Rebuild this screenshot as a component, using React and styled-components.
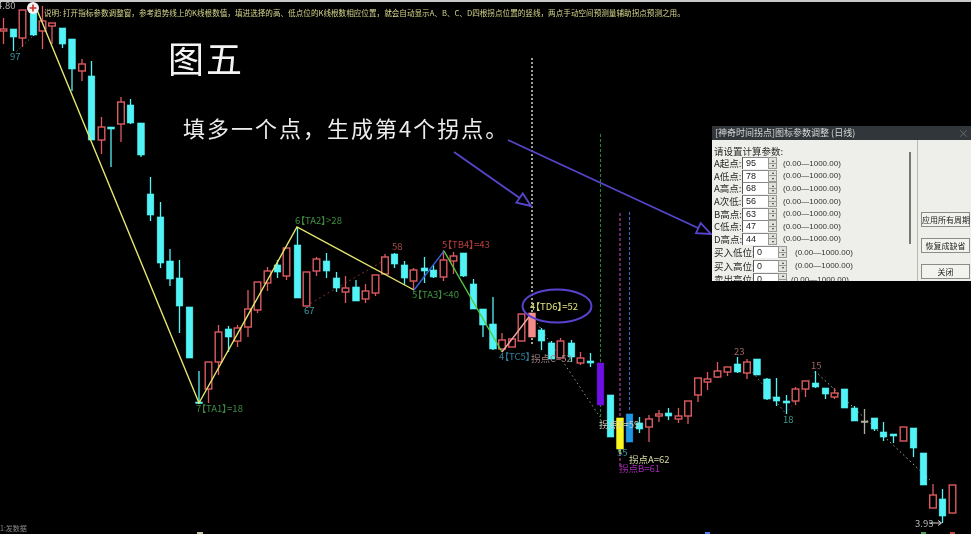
import React from "react"
import styled, { createGlobalStyle } from "styled-components"

const SANS = `"Liberation Sans", "Noto Sans CJK SC", sans-serif`
const CJK = `"Noto Sans CJK SC", "Liberation Sans", sans-serif`

const TONES = {
  red: "#dc5a60",
  cyan: "#52f3f6",
  pink: "#f58a8a",
  violet: "#6f0fe6",
  yellow: "#f8f820",
  blue: "#1e96e6",
  ash: "#b0ae9e",
}
const HOLLOW = ["red"]

// x, high, body top, body bottom, low, tone
const CANDLES = [
  [3.5, 18, 29, 31, 44, "red"], [13.5, 29, 29, 37, 51, "cyan"], [22.5, 10, 10, 38, 47, "red"],
  [33.5, 8, 12, 35, 36, "cyan"], [42.5, 6, 21, 31, 49, "red"], [52, 23, 23, 26, 44, "red"],
  [62.5, 28, 28, 44, 48, "cyan"], [72, 39, 39, 69, 91, "cyan"], [82, 59, 64, 71, 81, "red"],
  [91.5, 61, 76, 140, 140, "cyan"], [101.5, 117, 127, 140, 154, "red"], [111, 127, 127, 129, 167, "cyan"],
  [121, 97, 102, 124, 142, "red"], [130.5, 99, 105, 123, 124, "cyan"], [141, 123, 123, 155, 157, "cyan"],
  [150.5, 177, 194, 215, 221, "cyan"], [160.5, 202, 217, 263, 268, "cyan"], [170, 249, 261, 279, 286, "cyan"],
  [179.5, 260, 278, 306, 333, "cyan"], [189.5, 307, 307, 358, 358, "cyan"], [199, 371, 402, 403, 404, "cyan"],
  [208.5, 362, 362, 389, 403, "red"], [218.5, 325, 332, 362, 375, "red"], [228.5, 326, 329, 337, 352, "cyan"],
  [237.5, 325, 328, 341, 347, "red"], [248, 290, 309, 327, 337, "red"], [257.5, 282, 282, 310, 313, "red"],
  [267.5, 267, 271, 283, 291, "red"], [277.5, 260, 265, 272, 278, "cyan"], [286.5, 248, 248, 276, 280, "red"],
  [297.5, 228, 245, 298, 298, "cyan"], [306.5, 272, 272, 306, 306, "red"], [316.5, 257, 259, 271, 276, "red"],
  [326.5, 253, 261, 271, 278, "cyan"], [336.5, 272, 278, 288, 292, "cyan"], [345.5, 276, 288, 292, 303, "red"],
  [356, 280, 287, 301, 301, "cyan"], [365.5, 284, 291, 299, 303, "red"], [375.5, 275, 275, 293, 296, "red"],
  [385, 254, 257, 274, 275, "red"], [394.5, 253, 254, 264, 268, "cyan"], [404.5, 261, 265, 278, 285, "cyan"],
  [413.5, 268, 270, 281, 290, "red"], [424.5, 257, 268, 271, 283, "cyan"], [433.5, 265, 270, 277, 278, "cyan"],
  [443.5, 250, 260, 277, 281, "red"], [453.5, 252, 256, 261, 274, "red"], [463.5, 253, 253, 276, 277, "cyan"],
  [473.5, 279, 284, 309, 309, "cyan"], [483, 309, 309, 325, 337, "cyan"], [493, 297, 324, 349, 350, "cyan"],
  [502, 333, 340, 349, 350, "red"], [512, 339, 339, 347, 347, "red"], [521.5, 314, 314, 341, 341, "red"],
  [532, 313, 313, 337, 337, "pink"], [541.5, 328, 330, 341, 350, "cyan"], [551.5, 341, 343, 359, 359, "cyan"],
  [560.5, 338, 341, 358, 358, "red"], [571.5, 340, 343, 357, 362, "cyan"], [580.5, 352, 358, 363, 365, "red"],
  [590.5, 353, 361, 363, 367, "cyan"], [600.5, 363, 363, 405, 405, "violet"], [610.5, 395, 395, 437, 437, "cyan"],
  [620, 418, 418, 449, 454, "yellow"], [629.5, 414, 414, 442, 442, "blue"], [639.5, 417, 423, 429, 433, "cyan"],
  [649, 415, 419, 427, 442, "red"], [659, 410, 414, 416, 422, "red"], [668.5, 408, 413, 416, 420, "cyan"],
  [678.5, 408, 416, 419, 423, "red"], [688, 401, 401, 416, 424, "red"], [698, 378, 378, 395, 402, "red"],
  [707.5, 372, 379, 382, 390, "red"], [717.5, 362, 371, 377, 378, "red"], [727.5, 367, 367, 372, 376, "red"],
  [737.5, 357, 364, 372, 373, "cyan"], [747, 359, 362, 373, 379, "red"], [757, 359, 359, 375, 375, "cyan"],
  [767, 378, 379, 399, 400, "cyan"], [776.5, 378, 397, 401, 406, "cyan"], [786.5, 395, 401, 403, 414, "cyan"],
  [795.5, 387, 389, 401, 405, "red"], [805.5, 381, 381, 389, 397, "red"], [815.5, 371, 383, 387, 388, "cyan"],
  [825.5, 388, 388, 394, 399, "cyan"], [834.5, 388, 393, 397, 399, "red"], [844.5, 389, 389, 408, 408, "cyan"],
  [854.5, 406, 408, 421, 421, "cyan"], [864.5, 409, 421, 422, 434, "ash"], [874.5, 418, 418, 429, 431, "cyan"],
  [883.5, 422, 432, 437, 441, "cyan"], [893.5, 434, 434, 436, 443, "cyan"], [903.5, 427, 427, 441, 441, "red"],
  [913.5, 428, 428, 448, 457, "cyan"], [923.5, 453, 453, 485, 485, "cyan"], [933, 484, 495, 508, 508, "red"],
  [942.5, 489, 499, 516, 523, "cyan"], [952.5, 485, 485, 513, 513, "red"],
]

const TREND = [
  { d: "M35 5 L199 403 L297 227 L414 290", stroke: "#e6e66e", width: 1.4 },
  { d: "M414 290 L444 251", stroke: "#3a62d8", width: 1.4 },
  { d: "M444 251 L502 352", stroke: "#58c83c", width: 1.4 },
  { d: "M502 352 L532 313", stroke: "#f5a8a8", width: 1.4 },
]

const DOTTED = [
  { d: "M306 306 L385 260", stroke: "#8a2c2c", width: 1, dash: "2 3" },
  { d: "M537 323 L600 417", stroke: "#8f9a80", width: 1, dash: "1.5 3" },
  { d: "M35 34 L16 52", stroke: "#5f8f80", width: 0.8, dash: "1.5 2.5" },
  { d: "M747 365 L786 414", stroke: "#9a9a8a", width: 0.8, dash: "1.5 3" },
  { d: "M786 414 L815 371", stroke: "#7a3434", width: 0.8, dash: "1.5 3" },
  { d: "M815 371 L930 480", stroke: "#c8c8b4", width: 0.9, dash: "1.5 3" },
]

const GUIDES = [
  { x: 532, y1: 58, y2: 346, stroke: "#c8c8b8", width: 1.6, dash: "2 2" },
  { x: 600.5, y1: 134, y2: 420, stroke: "#28803a", width: 1.1, dash: "3 2" },
  { x: 620, y1: 213, y2: 466, stroke: "#a844a8", width: 1.2, dash: "3 2" },
  { x: 629.5, y1: 212, y2: 412, stroke: "#4068c8", width: 1.1, dash: "3 2" },
]

const LABELS = [
  { x: 10, y: 60, fill: "#3f9aa4", text: "97" },
  { x: -3, y: 9, fill: "#b5b5b5", text: "4.80" },
  { x: 196, y: 412, fill: "#3f8a48", text: "7【TA1】=18" },
  { x: 295, y: 224, fill: "#3f9040", text: "6【TA2】>28" },
  { x: 304, y: 314, fill: "#3f9aa4", text: "67" },
  { x: 392, y: 250, fill: "#a84a4a", text: "58" },
  { x: 442, y: 248, fill: "#b83c3c", text: "5【TB4】=43" },
  { x: 412, y: 298, fill: "#3f9040", text: "5【TA3】<40" },
  { x: 499, y: 360, fill: "#2f7f9c", text: "4【TC5】" },
  { x: 530, y: 310, fill: "#e0e07a", text: "4【TD6】=52" },
  { x: 531, y: 362, fill: "#a08080", text: "拐点C=52" },
  { x: 599, y: 428, fill: "#d0d0c0", text: "拐点X=59" },
  { x: 617, y: 456, fill: "#3f9aa4", text: "55" },
  { x: 629, y: 463, fill: "#d8d8a0", text: "拐点A=62" },
  { x: 619, y: 472, fill: "#a028b0", text: "拐点B=61" },
  { x: 734, y: 355, fill: "#a06464", text: "23" },
  { x: 811, y: 369, fill: "#a06464", text: "15" },
  { x: 783, y: 423, fill: "#3f9a8c", text: "18" },
  { x: 915, y: 527, fill: "#b8b8b8", text: "3.93" },
]

const PARAMS = [
  { name: "A起点", value: "95" },
  { name: "A低点", value: "78" },
  { name: "A高点", value: "68" },
  { name: "A次低", value: "56" },
  { name: "B高点", value: "63" },
  { name: "C低点", value: "47" },
  { name: "D高点", value: "44" },
  { name: "买入低位", value: "0", wide: true, gap: 8 },
  { name: "买入高位", value: "0", wide: true, gap: 8 },
  { name: "卖出高位", value: "0", wide: true, gap: 4 },
]

const Candle = ({ x, hi, top, bot, lo, tone }) => {
  const hollow = HOLLOW.includes(tone)
  const height = Math.max(bot - top, 1.5)
  return (
    <g>
      <Wick x1={x} x2={x} y1={hi} y2={lo} $tone={tone} />
      <Body
        x={x - 3.3}
        y={top}
        width={6.6}
        height={height}
        $tone={tone}
        $hollow={hollow}
      />
    </g>
  )
}

const Arrow = ({ x1, y1, x2, y2 }) => {
  const angle = Math.atan2(y2 - y1, x2 - x1)
  const len = 15
  const spread = 0.38
  const ax = x2 - len * Math.cos(angle - spread)
  const ay = y2 - len * Math.sin(angle - spread)
  const bx = x2 - len * Math.cos(angle + spread)
  const by = y2 - len * Math.sin(angle + spread)
  return (
    <g>
      <line x1={x1} y1={y1} x2={x2} y2={y2} stroke="#5546cc" strokeWidth="1.8" />
      <polygon
        points={`${x2},${y2} ${ax},${ay} ${bx},${by}`}
        fill="#000"
        stroke="#5546cc"
        strokeWidth="1.8"
      />
    </g>
  )
}

const Chart = () => (
  <ChartSvg viewBox="0 0 971 534" width="971" height="534">
    {GUIDES.map((g, i) => (
      <line
        key={i}
        x1={g.x}
        x2={g.x}
        y1={g.y1}
        y2={g.y2}
        stroke={g.stroke}
        strokeWidth={g.width}
        strokeDasharray={g.dash}
      />
    ))}
    {DOTTED.map((l, i) => (
      <path
        key={i}
        d={l.d}
        fill="none"
        stroke={l.stroke}
        strokeWidth={l.width}
        strokeDasharray={l.dash}
      />
    ))}
    {CANDLES.map(([x, hi, top, bot, lo, tone]) => (
      <Candle key={x} x={x} hi={hi} top={top} bot={bot} lo={lo} tone={tone} />
    ))}
    {TREND.map((l, i) => (
      <path key={i} d={l.d} fill="none" stroke={l.stroke} strokeWidth={l.width} />
    ))}
    {LABELS.map((l, i) => (
      <ChartText key={i} x={l.x} y={l.y} fill={l.fill}>
        {l.text}
      </ChartText>
    ))}
    <circle cx="33" cy="8" r="6" fill="#f4f4f4" />
    <path d="M33 4.5 V11.5 M29.5 8 H36.5" stroke="#d02828" strokeWidth="1.6" />
    <path d="M929 523 H941" stroke="#d8d8d8" strokeWidth="1" />
    <path d="M938 520.5 L941.5 523 L938 525.5" fill="none" stroke="#d8d8d8" strokeWidth="1" />
    <ellipse cx="557" cy="306" rx="34.5" ry="16.5" fill="none" stroke="#5a42d0" strokeWidth="2" />
    <Arrow x1={454} y1={152} x2={531} y2={206} />
    <Arrow x1={508} y1={140} x2={711} y2={234} />
    <rect x="197" y="532" width="6" height="2" fill="#c8c0a8" />
    <rect x="705" y="532" width="5" height="2" fill="#4a7ae8" />
    <rect x="921" y="532" width="5" height="2" fill="#4aa050" />
    <rect x="950" y="532" width="5" height="2" fill="#c04848" />
  </ChartSvg>
)

const SpinBox = ({ wide, value }) => (
  <SpinWrap>
    <Field $wide={wide}>{value}</Field>
    <Spin>
      <SpinBtn $up />
      <SpinBtn />
    </Spin>
  </SpinWrap>
)

const ParamDialog = () => (
  <Dialog>
    <TitleBar>
      <span>[神奇时间拐点]图标参数调整 (日线)</span>
      <CloseMark>×</CloseMark>
    </TitleBar>
    <DialogBody>
      <Params>
        <ParamsHead>请设置计算参数:</ParamsHead>
        {PARAMS.map(p => (
          <ParamRow key={p.name} $wide={p.wide}>
            <ParamName $wide={p.wide}>{p.name}:</ParamName>
            <SpinBox wide={p.wide} value={p.value} />
            <Range $gap={p.gap || 6}>(0.00—1000.00)</Range>
          </ParamRow>
        ))}
      </Params>
      <ScrollTrack>
        <ScrollThumb />
      </ScrollTrack>
      <SideActions>
        <ActionButton>应用所有周期</ActionButton>
        <ActionButton>恢复成缺省</ActionButton>
        <ActionButton>关闭</ActionButton>
      </SideActions>
    </DialogBody>
  </Dialog>
)

export default function App() {
  return (
    <>
      <GlobalStyle />
      <Stage>
        <Chart />
        <Notice>
          说明: 打开指标参数调整窗，参考趋势线上的K线根数值，填进选择的高、低点位的K线根数相应位置，就会自动显示A、B、C、D四根拐点位置的竖线，两点手动空间预测量辅助拐点预测之用。
        </Notice>
        <Heading>图五</Heading>
        <Caption>填多一个点，生成第4个拐点。</Caption>
        <StatusTag>1:发数据</StatusTag>
        <ParamDialog />
      </Stage>
    </>
  )
}

const GlobalStyle = createGlobalStyle`
  html, body {
    margin: 0;
    background: #000;
  }
  body {
    font-family: ${SANS};
    overflow: hidden;
  }
`

const Stage = styled.div`
  position: relative;
  width: 971px;
  height: 534px;
  background: #000;
  border-top: 2px solid #c8c8c8;
  box-sizing: border-box;
  overflow: hidden;
  filter: blur(0.35px);
`

const ChartSvg = styled.svg`
  position: absolute;
  top: -2px;
  left: 0;
  display: block;
`

const Wick = styled.line`
  stroke: ${p => TONES[p.$tone]};
  stroke-width: 1.3;
`

const Body = styled.rect`
  fill: ${p => (p.$hollow ? "#000" : TONES[p.$tone])};
  stroke: ${p => TONES[p.$tone]};
  stroke-width: ${p => (p.$hollow ? 1.4 : 0.6)};
`

const ChartText = styled.text`
  font-family: ${CJK};
  font-size: 9.5px;
  font-feature-settings: "palt";
`

const Notice = styled.div`
  position: absolute;
  top: 5px;
  left: 44px;
  width: 660px;
  font-family: ${CJK};
  font-size: 7.6px;
  line-height: 12px;
  white-space: nowrap;
  color: #d6d68e;
`

const Heading = styled.div`
  position: absolute;
  top: 30px;
  left: 168px;
  font-family: ${CJK};
  font-size: 36px;
  font-weight: 400;
  line-height: 50px;
  letter-spacing: 2px;
  color: #f4f4f4;
`

const Caption = styled.div`
  position: absolute;
  top: 108px;
  left: 183px;
  font-family: ${CJK};
  font-size: 22px;
  line-height: 34px;
  letter-spacing: 2px;
  color: #ececec;
`

const StatusTag = styled.div`
  position: absolute;
  top: 521px;
  left: 0;
  font-family: ${CJK};
  font-size: 7px;
  line-height: 10px;
  color: #8a8a8a;
`

const Dialog = styled.div`
  position: absolute;
  top: 124px;
  left: 712px;
  width: 259px;
  height: 155px;
  display: flex;
  flex-direction: column;
  background: #eeeeea;
  overflow: hidden;
  font-family: ${CJK};
  font-size: 9.5px;
  color: #2a2a2a;
`

const TitleBar = styled.div`
  flex: 0 0 14px;
  display: flex;
  align-items: center;
  justify-content: space-between;
  padding: 0 2px 0 3px;
  background: #30363a;
  color: #d8d8d8;
  font-size: 9px;
  line-height: 14px;
`

const CloseMark = styled.span`
  color: #6a6a6a;
  font-size: 11px;
`

const DialogBody = styled.div`
  flex: 1;
  display: flex;
  min-height: 0;
`

const Params = styled.div`
  flex: 1;
  min-width: 0;
  padding-left: 2px;
  overflow: hidden;
`

const ParamsHead = styled.div`
  height: 12px;
  padding-top: 5px;
  line-height: 12px;
`

const ParamRow = styled.div`
  display: flex;
  align-items: center;
  height: 12.6px;
  margin-top: ${p => (p.$wide ? "0.8px" : "0")};
`

const ParamName = styled.span`
  width: ${p => (p.$wide ? "39px" : "28px")};
  white-space: nowrap;
  line-height: 12px;
`

const SpinWrap = styled.div`
  display: flex;
  height: 12px;
`

const Field = styled.div`
  width: ${p => (p.$wide ? "25px" : "26px")};
  padding-left: 3px;
  box-sizing: border-box;
  background: #fff;
  border-left: 1px solid #555;
  border-top: 1px solid #888;
  font-family: ${SANS};
  font-size: 9px;
  line-height: 11px;
  color: #222;
`

const Spin = styled.div`
  width: 9px;
  display: flex;
  flex-direction: column;
`

const SpinBtn = styled.div`
  flex: 1;
  background: #e2e2dc;
  border: 1px solid #9a9a94;
  border-top-width: ${p => (p.$up ? "1px" : "0")};
  box-sizing: border-box;
  display: flex;
  align-items: center;
  justify-content: center;
  &::after {
    content: "";
    border-left: 1.5px solid transparent;
    border-right: 1.5px solid transparent;
    border-bottom: ${p => (p.$up ? "2px solid #333" : "0")};
    border-top: ${p => (p.$up ? "0" : "2px solid #333")};
  }
`

const Range = styled.span`
  margin-left: ${p => p.$gap}px;
  font-family: ${SANS};
  font-size: 8px;
  white-space: nowrap;
  color: #333;
`

const ScrollTrack = styled.div`
  flex: 0 0 8px;
  padding-top: 12px;
`

const ScrollThumb = styled.div`
  width: 2px;
  height: 92px;
  background: #777;
`

const SideActions = styled.div`
  flex: 0 0 50px;
  display: flex;
  flex-direction: column;
  justify-content: flex-end;
  align-items: flex-start;
  gap: 11px;
  padding: 0 0 2px 3px;
  border-left: 1px solid #b8b8b0;
  box-sizing: content-box;
`

const ActionButton = styled.button`
  width: 49px;
  height: 15px;
  padding: 0;
  background: #f2f2ee;
  border: 1px solid #8c8c86;
  font-family: ${CJK};
  font-size: 8px;
  line-height: 13px;
  white-space: nowrap;
  color: #222;
`
